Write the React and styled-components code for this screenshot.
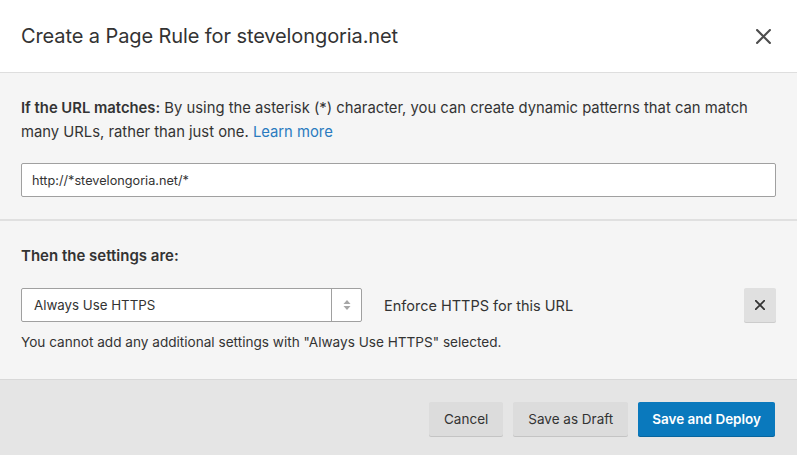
import styled, { createGlobalStyle } from 'styled-components'

const GlobalStyle = createGlobalStyle`
  html, body {
    margin: 0;
    padding: 0;
    background: #ffffff;
  }
  body {
    font-family: Inter, "Open Sans", "Liberation Sans", sans-serif;
    color: #333333;
    -webkit-font-smoothing: antialiased;
  }
  * {
    box-sizing: border-box;
  }
`

const Modal = styled.div`
  width: 797px;
  height: 455px;
  display: flex;
  flex-direction: column;
  background: #f5f5f5;
  overflow: hidden;
`

const Header = styled.div`
  height: 73px;
  padding: 0 22px 0 21px;
  display: flex;
  align-items: center;
  justify-content: space-between;
  background: #ffffff;
  border-bottom: 1px solid #dedede;
`

const Title = styled.h1`
  margin: 0;
  font-size: 20px;
  font-weight: 400;
  color: #333333;
  letter-spacing: -0.1px;
`

const CloseButton = styled.button`
  width: 24px;
  height: 24px;
  padding: 0;
  border: none;
  background: none;
  display: flex;
  align-items: center;
  justify-content: center;
  cursor: pointer;
`

const Section = styled.div`
  padding: ${p => p.$pad};
  border-bottom: ${p => p.$border};
`

const Paragraph = styled.p`
  margin: 0;
  font-size: 14.8px;
  line-height: 24px;
  color: #333333;

  strong {
    font-weight: 600;
  }

  a {
    color: #2a7bbf;
    text-decoration: none;
  }
`

const Heading = styled.div`
  font-size: 15px;
  line-height: 24px;
  font-weight: 600;
  color: #333333;
`

const TextInput = styled.input`
  display: block;
  width: 100%;
  height: 34px;
  margin-top: 19px;
  padding: 0 10px;
  font-family: inherit;
  font-size: 12.7px;
  color: #333333;
  background: #ffffff;
  border: 1px solid #a0a0a0;
  border-radius: 2px;
  outline: none;
`

const SettingRow = styled.div`
  margin-top: 20px;
  display: flex;
  align-items: center;
`

const Select = styled.div`
  width: 341px;
  height: 34px;
  display: flex;
  background: #ffffff;
  border: 1px solid #a0a0a0;
  border-radius: 2px;
`

const SelectValue = styled.div`
  flex: 1;
  display: flex;
  align-items: center;
  padding-left: 12px;
  font-size: 13.3px;
  color: #333333;
  border-right: 1px solid #a0a0a0;
`

const SelectArrows = styled.div`
  width: 29px;
  display: flex;
  align-items: center;
  justify-content: center;
`

const SettingDescription = styled.div`
  margin-left: 22px;
  flex: 1;
  font-size: 14.5px;
  color: #333333;
`

const RemoveButton = styled.button`
  width: 32px;
  height: 34px;
  padding: 0;
  border: none;
  border-radius: 2px;
  background: #e0e0e0;
  box-shadow: 0 1px 0 #cccccc;
  display: flex;
  align-items: center;
  justify-content: center;
  cursor: pointer;
`

const HelpText = styled.p`
  margin: 8px 0 0;
  font-size: 13.6px;
  line-height: 24px;
  color: #333333;
`

const Footer = styled.div`
  flex: 1;
  display: flex;
  justify-content: flex-end;
  align-items: flex-start;
  gap: 10px;
  padding: 22px 22px 0;
  background: #e5e5e5;
  border-top: 1px solid #d8d8d8;
`

const Button = styled.button`
  height: 34px;
  padding: 0 ${p => (p.$primary ? '14px' : '15px')};
  font-family: inherit;
  font-size: 13.5px;
  font-weight: ${p => (p.$primary ? 600 : 400)};
  color: ${p => (p.$primary ? '#ffffff' : '#333333')};
  background: ${p => (p.$primary ? '#0a79bd' : '#dcdcdc')};
  border: none;
  border-radius: 2px;
  box-shadow: 0 1px 0 ${p => (p.$primary ? '#07659e' : '#c4c4c4')};
  cursor: pointer;
`

const CloseIcon = ({ size, stroke, color }) => (
  <svg width={size} height={size} viewBox="0 0 14 14">
    <path d="M1 1L13 13M13 1L1 13" stroke={color} strokeWidth={stroke} strokeLinecap="square" />
  </svg>
)

export default function App() {
  return (
    <>
      <GlobalStyle />
      <Modal>
        <Header>
          <Title>Create a Page Rule for stevelongoria.net</Title>
          <CloseButton aria-label="Close">
            <CloseIcon size={15} stroke={2} color="#4d4d4d" />
          </CloseButton>
        </Header>

        <Section $pad="23px 21px 22px" $border="2px solid #e0e0e0">
          <Paragraph>
            <strong>If the URL matches:</strong> By using the asterisk (*) character, you can
            create dynamic patterns that can match many URLs, rather than just one.{' '}
            <a href="#">Learn more</a>
          </Paragraph>
          <TextInput defaultValue="http://*stevelongoria.net/*" />
        </Section>

        <Section $pad="23px 21px 25px" $border="none">
          <Heading>Then the settings are:</Heading>
          <SettingRow>
            <Select>
              <SelectValue>Always Use HTTPS</SelectValue>
              <SelectArrows>
                <svg width="8" height="12" viewBox="0 0 8 12">
                  <path d="M4 1L7.5 5H0.5Z" fill="#a6a6a6" />
                  <path d="M4 11L7.5 7H0.5Z" fill="#a6a6a6" />
                </svg>
              </SelectArrows>
            </Select>
            <SettingDescription>Enforce HTTPS for this URL</SettingDescription>
            <RemoveButton aria-label="Remove setting">
              <CloseIcon size={10} stroke={2.4} color="#333333" />
            </RemoveButton>
          </SettingRow>
          <HelpText>You cannot add any additional settings with "Always Use HTTPS" selected.</HelpText>
        </Section>

        <Footer>
          <Button>Cancel</Button>
          <Button>Save as Draft</Button>
          <Button $primary>Save and Deploy</Button>
        </Footer>
      </Modal>
    </>
  )
}
